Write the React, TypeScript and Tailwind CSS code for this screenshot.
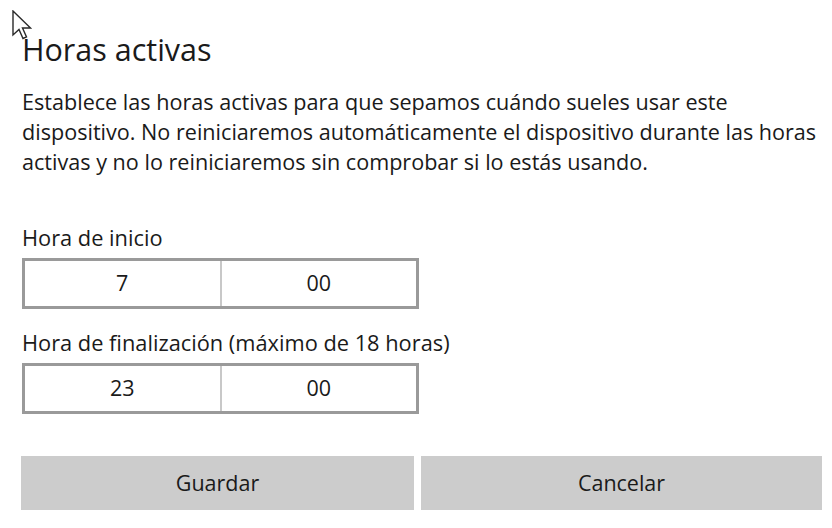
const Cursor = () => (
  <svg
    className="absolute left-[12px] top-[10px]"
    width="20"
    height="30"
    viewBox="0 0 20 30"
  >
    <path
      d="M1 1 L1 25 L7 19.5 L11 28.5 L14.5 27 L10.5 18 L18.5 18 Z"
      fill="#ffffff"
      stroke="#2a2a2a"
      strokeWidth="1.4"
      strokeLinejoin="miter"
    />
  </svg>
)

const TimeBox = ({ hour, minute }: { hour: string; minute: string }) => (
  <div className="flex w-[397px] h-[51px] border-[3px] border-[#9a9a9a] bg-white text-[21.5px]">
    <div className="flex-1 flex items-center justify-center border-r-2 border-[#c8c8c8]">
      {hour}
    </div>
    <div className="flex-1 flex items-center justify-center">{minute}</div>
  </div>
)

export default function App() {
  return (
    <div
      className="relative w-[832px] h-[528px] bg-white text-[#1a1a1a] overflow-hidden"
      style={{ fontFamily: '"Open Sans", "Noto Sans", sans-serif' }}
    >
      <Cursor />
      <div className="pl-[22px] pr-[10px] pt-[29px] flex flex-col">
        <h1 className="text-[30.5px] leading-[40px] font-normal">Horas activas</h1>
        <p className="mt-[18px] text-[21.6px] leading-[30px] whitespace-nowrap">
          Establece las horas activas para que sepamos cuándo sueles usar este
          <br />
          dispositivo. No reiniciaremos automáticamente el dispositivo durante las horas
          <br />
          activas y no lo reiniciaremos sin comprobar si lo estás usando.
        </p>
        <div className="mt-[47px] text-[21.8px] leading-[28px]">Hora de inicio</div>
        <div className="mt-[6px]">
          <TimeBox hour="7" minute="00" />
        </div>
        <div className="mt-[20px] text-[21.8px] leading-[28px]">
          Hora de finalización (máximo de 18 horas)
        </div>
        <div className="mt-[6px]">
          <TimeBox hour="23" minute="00" />
        </div>
        <div className="mt-[42px] flex gap-[7px] -ml-[1px]">
          <button className="w-[393px] h-[54px] bg-[#cccccc] text-[21.5px]">Guardar</button>
          <button className="w-[401px] h-[54px] bg-[#cccccc] text-[21.5px]">Cancelar</button>
        </div>
      </div>
    </div>
  )
}
